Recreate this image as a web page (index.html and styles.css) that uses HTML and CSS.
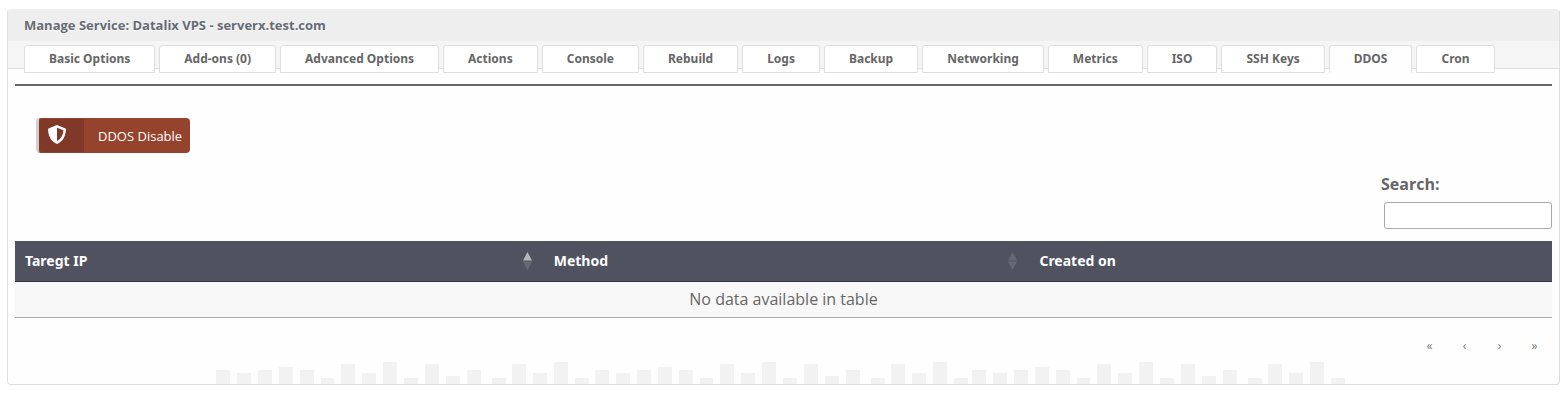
FILE: index.html
```html
<!DOCTYPE html>
<html lang="en">
<head>
    <meta charset="UTF-8">
    <meta name="viewport" content="width=device-width, initial-scale=1.0">
    <title>Manage Service</title>
    <link rel="stylesheet" href="styles.css">
</head>
<body>
    <div class="panel">
        <h1 class="panel-title">Manage Service: Datalix VPS - serverx.test.com</h1>
        <nav class="tabs">
            <a class="tab" href="#basic">Basic Options</a>
            <a class="tab" href="#addons">Add-ons (0)</a>
            <a class="tab" href="#advanced">Advanced Options</a>
            <a class="tab" href="#actions">Actions</a>
            <a class="tab" href="#console">Console</a>
            <a class="tab" href="#rebuild">Rebuild</a>
            <a class="tab" href="#logs">Logs</a>
            <a class="tab" href="#backup">Backup</a>
            <a class="tab" href="#networking">Networking</a>
            <a class="tab" href="#metrics">Metrics</a>
            <a class="tab" href="#iso">ISO</a>
            <a class="tab" href="#ssh">SSH Keys</a>
            <a class="tab active" href="#ddos">DDOS</a>
            <a class="tab" href="#cron">Cron</a>
        </nav>

        <div class="content">
            <hr class="divider">
            <button class="button" type="button">
                <span class="button-icon">
                    <svg width="18" height="19" viewBox="0 0 18 19">
                        <path d="M9 0 L17 3.2 Q17.9 3.6 17.9 4.6 C17.9 10.5 15 16.4 9.8 18.7 Q9 19 8.2 18.7 C3 16.4 0.1 10.5 0.1 4.6 Q0.1 3.6 1 3.2 Z M9 2.8 V16.1 C12.8 14.2 15.2 10 15.4 5.3 Z" fill="#fff" fill-rule="evenodd"/>
                    </svg>
                </span>
                <span class="button-text">DDOS Disable</span>
            </button>

            <div class="search">
                <label for="search">Search:</label>
                <input type="search" id="search">
            </div>

            <table class="table">
                <thead>
                    <tr>
                        <th class="col-ip">
                            <div class="th-inner">Taregt IP
                                <svg width="9" height="18" viewBox="0 0 9 18"><path d="M4.5 0 L9 8.5 H0 Z" fill="#b5b6ba"/><path d="M0 9.5 H9 L4.5 18 Z" fill="#666974"/></svg>
                            </div>
                        </th>
                        <th class="col-method">
                            <div class="th-inner">Method
                                <svg width="9" height="18" viewBox="0 0 9 18"><path d="M4.5 0 L9 8.5 H0 Z" fill="#666974"/><path d="M0 9.5 H9 L4.5 18 Z" fill="#666974"/></svg>
                            </div>
                        </th>
                        <th>Created on</th>
                    </tr>
                </thead>
                <tbody>
                    <tr>
                        <td colspan="3">No data available in table</td>
                    </tr>
                </tbody>
            </table>

            <div class="pagination">
                <button type="button" aria-label="First">&laquo;</button>
                <button type="button" aria-label="Previous">&lsaquo;</button>
                <button type="button" aria-label="Next">&rsaquo;</button>
                <button type="button" aria-label="Last">&raquo;</button>
            </div>
        </div>

        <!-- Decorative bars -->
        <svg class="bars" width="1135" height="22" viewBox="0 0 1135 22">
            <defs>
                <path id="bars" d="M0 22v-14h14v14z M21 22v-11h14v11z M42 22v-14h14v14z M63 22v-17h14v17z M84 22v-14h14v14z M105 22v-6h13v6z M125 22v-20h14v20z M146 22v-11h14v11z M167 22v-22h14v22z M188 22v-6h14v6z M209 22v-20h14v20z M230 22v-8h14v8z M251 22v-14h14v14z M276 22v-6h14v6z M296 22v-20h14v20z M317 22v-11h14v11z M338 22v-22h14v22z M359 22v-6h14v6z"/>
            </defs>
            <g fill="#f2f2f2">
                <use href="#bars"/>
                <use href="#bars" x="379"/>
                <use href="#bars" x="756"/>
            </g>
        </svg>
    </div>
</body>
</html>
```

FILE: styles.css
```css
* {
    box-sizing: border-box;
}
body {
    margin: 0;
    padding: 9px 5px 8px 7px;
    font-family: "Open Sans", "Noto Sans", sans-serif;
    color: #666;
    background: #fff;
}
.panel {
    border: 1px solid #dedede;
    border-top-color: #eee;
    border-radius: 4px;
    background: #fefefe;
}
.panel-title {
    margin: 0;
    padding: 0 16px;
    font-size: 13px;
    line-height: 31px;
    color: #666b73;
    text-shadow: 0 1px 0 #fff;
    background: #eee;
}
.tabs {
    display: flex;
    gap: 4px;
    height: 28px;
    padding: 4px 16px 0;
    background: #f5f5f5;
    border-bottom: 1px solid #dedede;
}
.tab {
    height: 28px;
    padding: 0 24px;
    border: 1px solid #dedede;
    border-radius: 3px 3px 0 0;
    background: #fff;
    color: #666;
    font-family: "Noto Sans", sans-serif;
    font-size: 12px;
    font-weight: bold;
    line-height: 26px;
    text-decoration: none;
    white-space: nowrap;
}
.tab.active {
    background: #fefefe;
    border-bottom-color: #fefefe;
}
.content {
    padding: 15px 7px 0;
}
.divider {
    height: 2px;
    margin: 0 0 32px;
    border: none;
    background: #666;
}
.button {
    display: flex;
    height: 35px;
    margin-left: 21px;
    padding: 0;
    border: none;
    border-left: 3px solid #d0d0d0;
    border-radius: 4px;
    background: #96432e;
    color: #fff;
    font-family: inherit;
    font-size: 13px;
    line-height: 36px;
    cursor: pointer;
}
.button-icon {
    width: 45px;
    height: 35px;
    padding: 6px 9px;
    border: 1px solid #96432e;
    border-width: 1px 0;
    border-radius: 4px 0 0 4px;
    background: #803928;
    text-align: left;
}
.button-icon svg {
    display: block;
}
.button-text {
    padding: 0 8px 0 14px;
}
.search {
    display: flex;
    flex-direction: column;
    width: 171px;
    margin: 20px 0 12px auto;
    font-size: 16px;
    font-weight: bold;
    line-height: 22px;
}
.search input {
    width: 168px;
    height: 27px;
    margin: 7px 0 0 3px;
    padding: 5px;
    border: 1px solid #aaa;
    border-radius: 3px;
    background: #fff;
}
.table {
    width: 100%;
    border-collapse: separate;
    border-spacing: 0;
    table-layout: fixed;
}
.table th {
    height: 41px;
    padding: 0 10px;
    border-bottom: 1px solid #363642;
    background: #50535f;
    color: #fff;
    font-family: "Noto Sans", sans-serif;
    font-size: 14px;
    line-height: 20px;
    text-align: left;
}
.table .col-ip {
    width: 34.4%;
}
.table .col-method {
    width: 31.6%;
}
.th-inner {
    display: flex;
    align-items: center;
    justify-content: space-between;
    padding-right: 2px;
}
.table td {
    height: 36px;
    padding: 0 10px 2px;
    border-bottom: 1px solid #aaa;
    background: #f8f8f8;
    font-size: 16px;
    line-height: 22px;
    text-align: center;
}
.pagination {
    display: flex;
    justify-content: flex-end;
    padding: 17px 0 7px;
}
.pagination button {
    width: 35px;
    height: 20px;
    padding: 0;
    border: none;
    background: none;
    color: #777;
    font-family: inherit;
    font-size: 12px;
    cursor: pointer;
}
.bars {
    display: block;
    margin: 0 auto;
}
```
